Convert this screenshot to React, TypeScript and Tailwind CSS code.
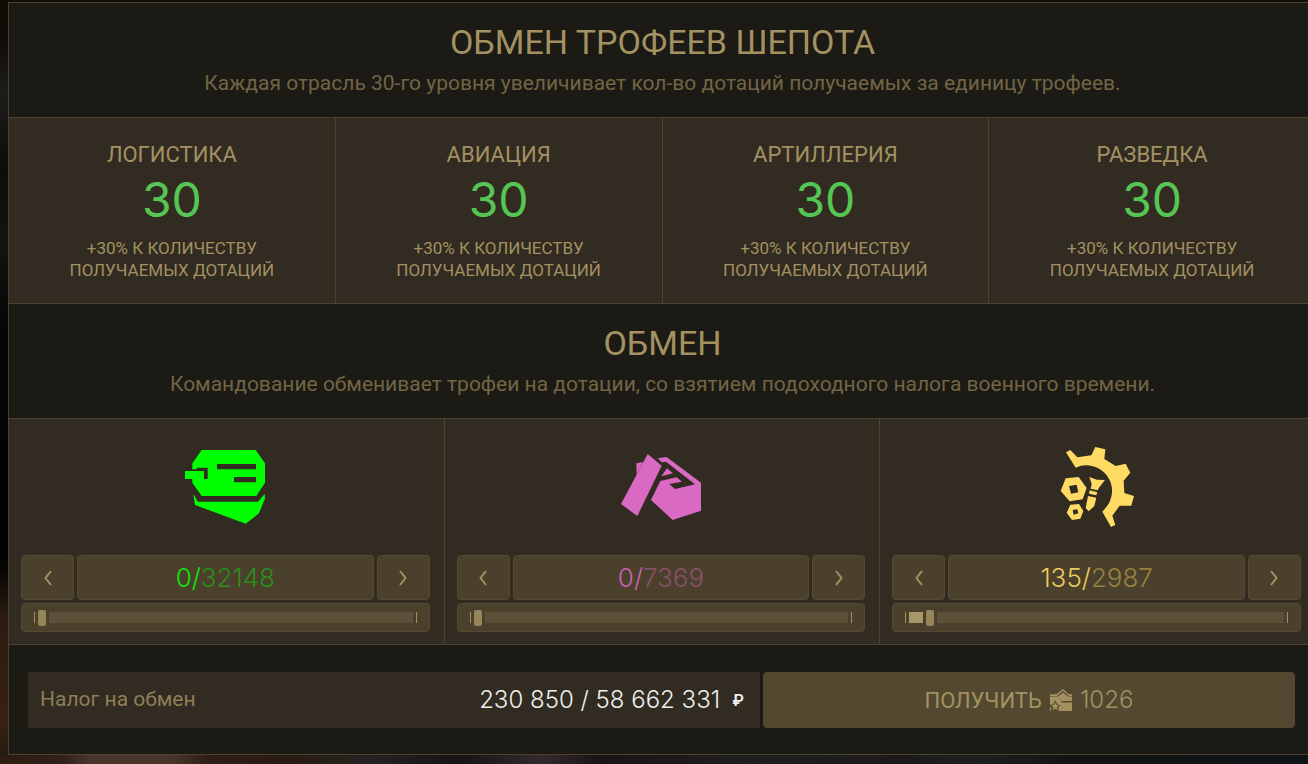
import { type ReactNode, useState } from 'react';

const branches = ['Логистика', 'Авиация', 'Артиллерия', 'Разведка'];

function TankIcon() {
  return (
    <svg className="size-20" viewBox="45 51 240 240" fill="#00ff00" aria-hidden>
      <path
        fillRule="evenodd"
        d="M95 60H257L285 100V158L259 198H95L67 158V147H113V113H80V118H67V100ZM141 102V118H258V102ZM192 141V157H258V141Z"
      />
      <path d="M45 123H102V147H45Z" />
      <path d="M70 192L84 215H264L284 192L285 205L267 250L227 281L75 225Z" />
    </svg>
  );
}

function CrateIcon() {
  return (
    <svg className="size-20" viewBox="45 51 240 240" fill="#da69c4" aria-hidden>
      <path d="M125 72L167 107L94 258L45 222Z" />
      <path d="M91 100L111 96L92 134Z" />
      <path d="M155 85L182 81L285 158V242L200 270L135 210L163 153L212 142L228 155L190 162L207 177L267 163L180 95L167 97Z" />
      <path d="M183 115L201 130L166 139Z" />
    </svg>
  );
}

function PartsIcon() {
  return (
    <svg className="size-20" viewBox="42 51 240 240" fill="#ffdb63" aria-hidden>
      <path d="M69 67L82 60L103 82L145 76L157 51L187 58L184 87L218 108L248 101L262 128L242 152L244 189L273 198L265 227L230 227L208 257L217 285L204 291L178 245L185 237A77 77 0 0 0 98 113Z" />
      <path
        fillRule="evenodd"
        d="M68 145L107 141L131 174L119 208L80 214L53 183ZM78 168L84 191L106 187L101 164Z"
      />
      <path
        fillRule="evenodd"
        d="M82 224L108 222L121 243L112 266L87 270L71 248ZM89 240L92 254L106 250L103 238Z"
      />
      <path d="M139 141L162 149L186 150L168 173L164 181L143 176L146 162Z" />
      <path d="M140 181L163 187L160 196L138 191Z" />
      <path d="M135 198L160 203L154 228L137 244L128 234Z" />
    </svg>
  );
}

function SupplyIcon() {
  return (
    <svg className="size-[22px]" viewBox="0 0 64 64" fill="currentColor" aria-hidden>
      <path d="M0 15H19L38 0L55 15H64V20H55L38 5L20 20H0Z" />
      <path d="M24 22L38 10L52 22H64V35H34L27 26H0V22Z" />
      <path d="M34 39H64V64H26L24 54L31 47L22 45L15 33L9 44L0 46V26H27L34 35Z" />
      <path d="M0 52L4 55L2 64H0Z" />
      <path d="M15 38L18 46L26 47L20 53L22 62L15 57L8 62L10 53L4 47L12 46Z" />
    </svg>
  );
}

function Chevron({ flip }: { flip?: boolean }) {
  return (
    <svg
      className={flip ? 'w-2 h-4 -scale-x-100' : 'w-2 h-4'}
      viewBox="0 0 8 16"
      fill="none"
      stroke="#a39161"
      strokeWidth="2"
      aria-hidden
    >
      <path d="M7 1L1.5 8L7 15" />
    </svg>
  );
}

type Trophy = {
  id: string;
  label: string;
  icon: ReactNode;
  initial: number;
  max: number;
  valueColor: string;
  maxColor: string;
};

const trophies: Trophy[] = [
  {
    id: 'armor',
    label: 'Техника',
    icon: <TankIcon />,
    initial: 0,
    max: 32148,
    valueColor: 'text-[#0de60b]',
    maxColor: 'text-[#2c8d1c]',
  },
  {
    id: 'crates',
    label: 'Материалы',
    icon: <CrateIcon />,
    initial: 0,
    max: 7369,
    valueColor: 'text-[#c962b3]',
    maxColor: 'text-[#885069]',
  },
  {
    id: 'parts',
    label: 'Детали',
    icon: <PartsIcon />,
    initial: 135,
    max: 2987,
    valueColor: 'text-[#ebcb5d]',
    maxColor: 'text-[#96823f]',
  },
];

function SectionTitle({ title, text }: { title: string; text: string }) {
  return (
    <header className="h-[115px] pt-[19px] border-b border-[#4b432c] text-center whitespace-nowrap">
      <h2 className="text-[34px] leading-10 uppercase text-[#a39161]">{title}</h2>
      <p className="mt-1 text-[21px] leading-[34px] text-[#736543]">{text}</p>
    </header>
  );
}

function StepButton({ label, flip, onClick }: { label: string; flip?: boolean; onClick: () => void }) {
  return (
    <button
      className="w-[53px] flex items-center justify-center rounded border border-[#554b31] bg-[#4a402b]"
      aria-label={label}
      onClick={onClick}
    >
      <Chevron flip={flip} />
    </button>
  );
}

function TrophyCard({ id, label, icon, initial, max, valueColor, maxColor }: Trophy) {
  const [value, setValue] = useState(initial);

  const change = (next: number) => setValue(Math.min(max, Math.max(0, next)));

  return (
    <article className="pt-7 pb-3 pl-3 pr-[14px] flex flex-col border-r border-[#4b432c]">
      <div className="flex justify-center">{icon}</div>
      <div className="mt-7 h-[45px] flex gap-[3px]">
        <StepButton label="Меньше" onClick={() => change(value - 1)} />
        <div className="flex-1 flex items-center justify-center rounded border border-[#554b31] bg-[#4a402b] font-['Inter','Liberation_Sans',sans-serif] text-[26px] font-light">
          <span className={valueColor}>{value}/</span>
          <span className={maxColor}>{max}</span>
        </div>
        <StepButton label="Больше" flip onClick={() => change(value + 1)} />
      </div>
      <div className="mt-[3px] h-[29px] px-3 flex items-center gap-[3px] rounded border border-[#554b31] bg-[#4a402b]">
        <span className="w-px h-[11px] bg-[#a39161]" />
        <div className="relative flex-1 h-4 flex items-center">
          <div className="w-full h-[11px] bg-[#5c5038]">
            <div className="h-full bg-[#a8976a]" style={{ width: `${(value / max) * 100}%` }} />
          </div>
          <input
            id={id}
            type="range"
            min={0}
            max={max}
            value={value}
            aria-label={label}
            onChange={e => change(Number(e.target.value))}
            className="absolute inset-0 w-full h-4 appearance-none bg-transparent [&::-webkit-slider-thumb]:appearance-none [&::-webkit-slider-thumb]:w-2 [&::-webkit-slider-thumb]:h-4 [&::-webkit-slider-thumb]:rounded-xs [&::-webkit-slider-thumb]:bg-[#95865a] [&::-webkit-slider-thumb]:shadow-[0_0_0_3px_#4a402b]"
          />
        </div>
        <span className="w-px h-[11px] bg-[#a39161]" />
      </div>
    </article>
  );
}

export default function App() {
  return (
    <div className="min-h-screen overflow-hidden pt-[2px] pl-2 bg-[linear-gradient(to_bottom,#100c06_0,#0f0d08_40px,#1d1d1c_90px,#0c0c0b_170px,#141413_240px,#050505_330px,#020202_560px,#2c1c10_620px,#362114_720px,#251910_764px)] font-['Roboto','Liberation_Sans',sans-serif] text-[#a39161]">
      <main className="w-[calc(100%+8px)] border-y border-l border-[#4b432c] bg-[#1b1a15]">
        <SectionTitle
          title="Обмен трофеев Шепота"
          text="Каждая отрасль 30-го уровня увеличивает кол-во дотаций получаемых за единицу трофеев."
        />
        <section className="grid grid-cols-4 border-b border-[#4b432c] bg-[#322b21]">
          {branches.map(name => (
            <article
              key={name}
              className="h-[185px] pt-5 text-center uppercase border-r border-[#4b432c]"
            >
              <h3 className="text-[22px] leading-[34px]">{name}</h3>
              <p className="font-['Inter','Liberation_Sans',sans-serif] text-5xl leading-[56px] text-[#55c553]">30</p>
              <p className="mt-[9px] text-[17px] leading-[22px]">
                +30% к количеству
                <br />
                получаемых дотаций
              </p>
            </article>
          ))}
        </section>
        <SectionTitle
          title="Обмен"
          text="Командование обменивает трофеи на дотации, со взятием подоходного налога военного времени."
        />
        <section className="grid grid-cols-3 border-b border-[#4b432c] bg-[#322b21]">
          {trophies.map(item => (
            <TrophyCard key={item.id} {...item} />
          ))}
        </section>
        <footer className="pt-[27px] pb-[26px] pl-[19px] pr-[21px] grid grid-cols-[11fr_8fr] gap-[3px] text-[22px]">
          <div className="h-14 pl-3 pr-4 flex items-center justify-between bg-[#322b21] text-[#8f7f56]">
            <span className="text-[21px]">Налог на обмен</span>
            <span className="flex items-center gap-3 font-['Inter','Liberation_Sans',sans-serif] text-2xl font-light text-[#eeeeee]">
              230 850 / 58 662 331
              <span className="text-base font-semibold">₽</span>
            </span>
          </div>
          <button className="h-14 flex items-center justify-center gap-2 rounded bg-[#524930] uppercase">
            Получить
            <SupplyIcon />
            <span className="font-['Inter','Liberation_Sans',sans-serif] text-2xl font-light">1026</span>
          </button>
        </footer>
      </main>
      <div className="-ml-2 h-[9px] bg-[linear-gradient(to_right,#2e1c10_0,#302018_60px,#4a352c_90px,#4a352c_170px,#2e1d14_210px,#2a1b12_290px,#242322_370px,#161513_460px,#332a29_540px,#1c1412_600px,#1f1f20_750px,#1c1a1a_900px,#1e201f_980px,#121212_1080px,#10141a_100%)]" />
    </div>
  );
}
